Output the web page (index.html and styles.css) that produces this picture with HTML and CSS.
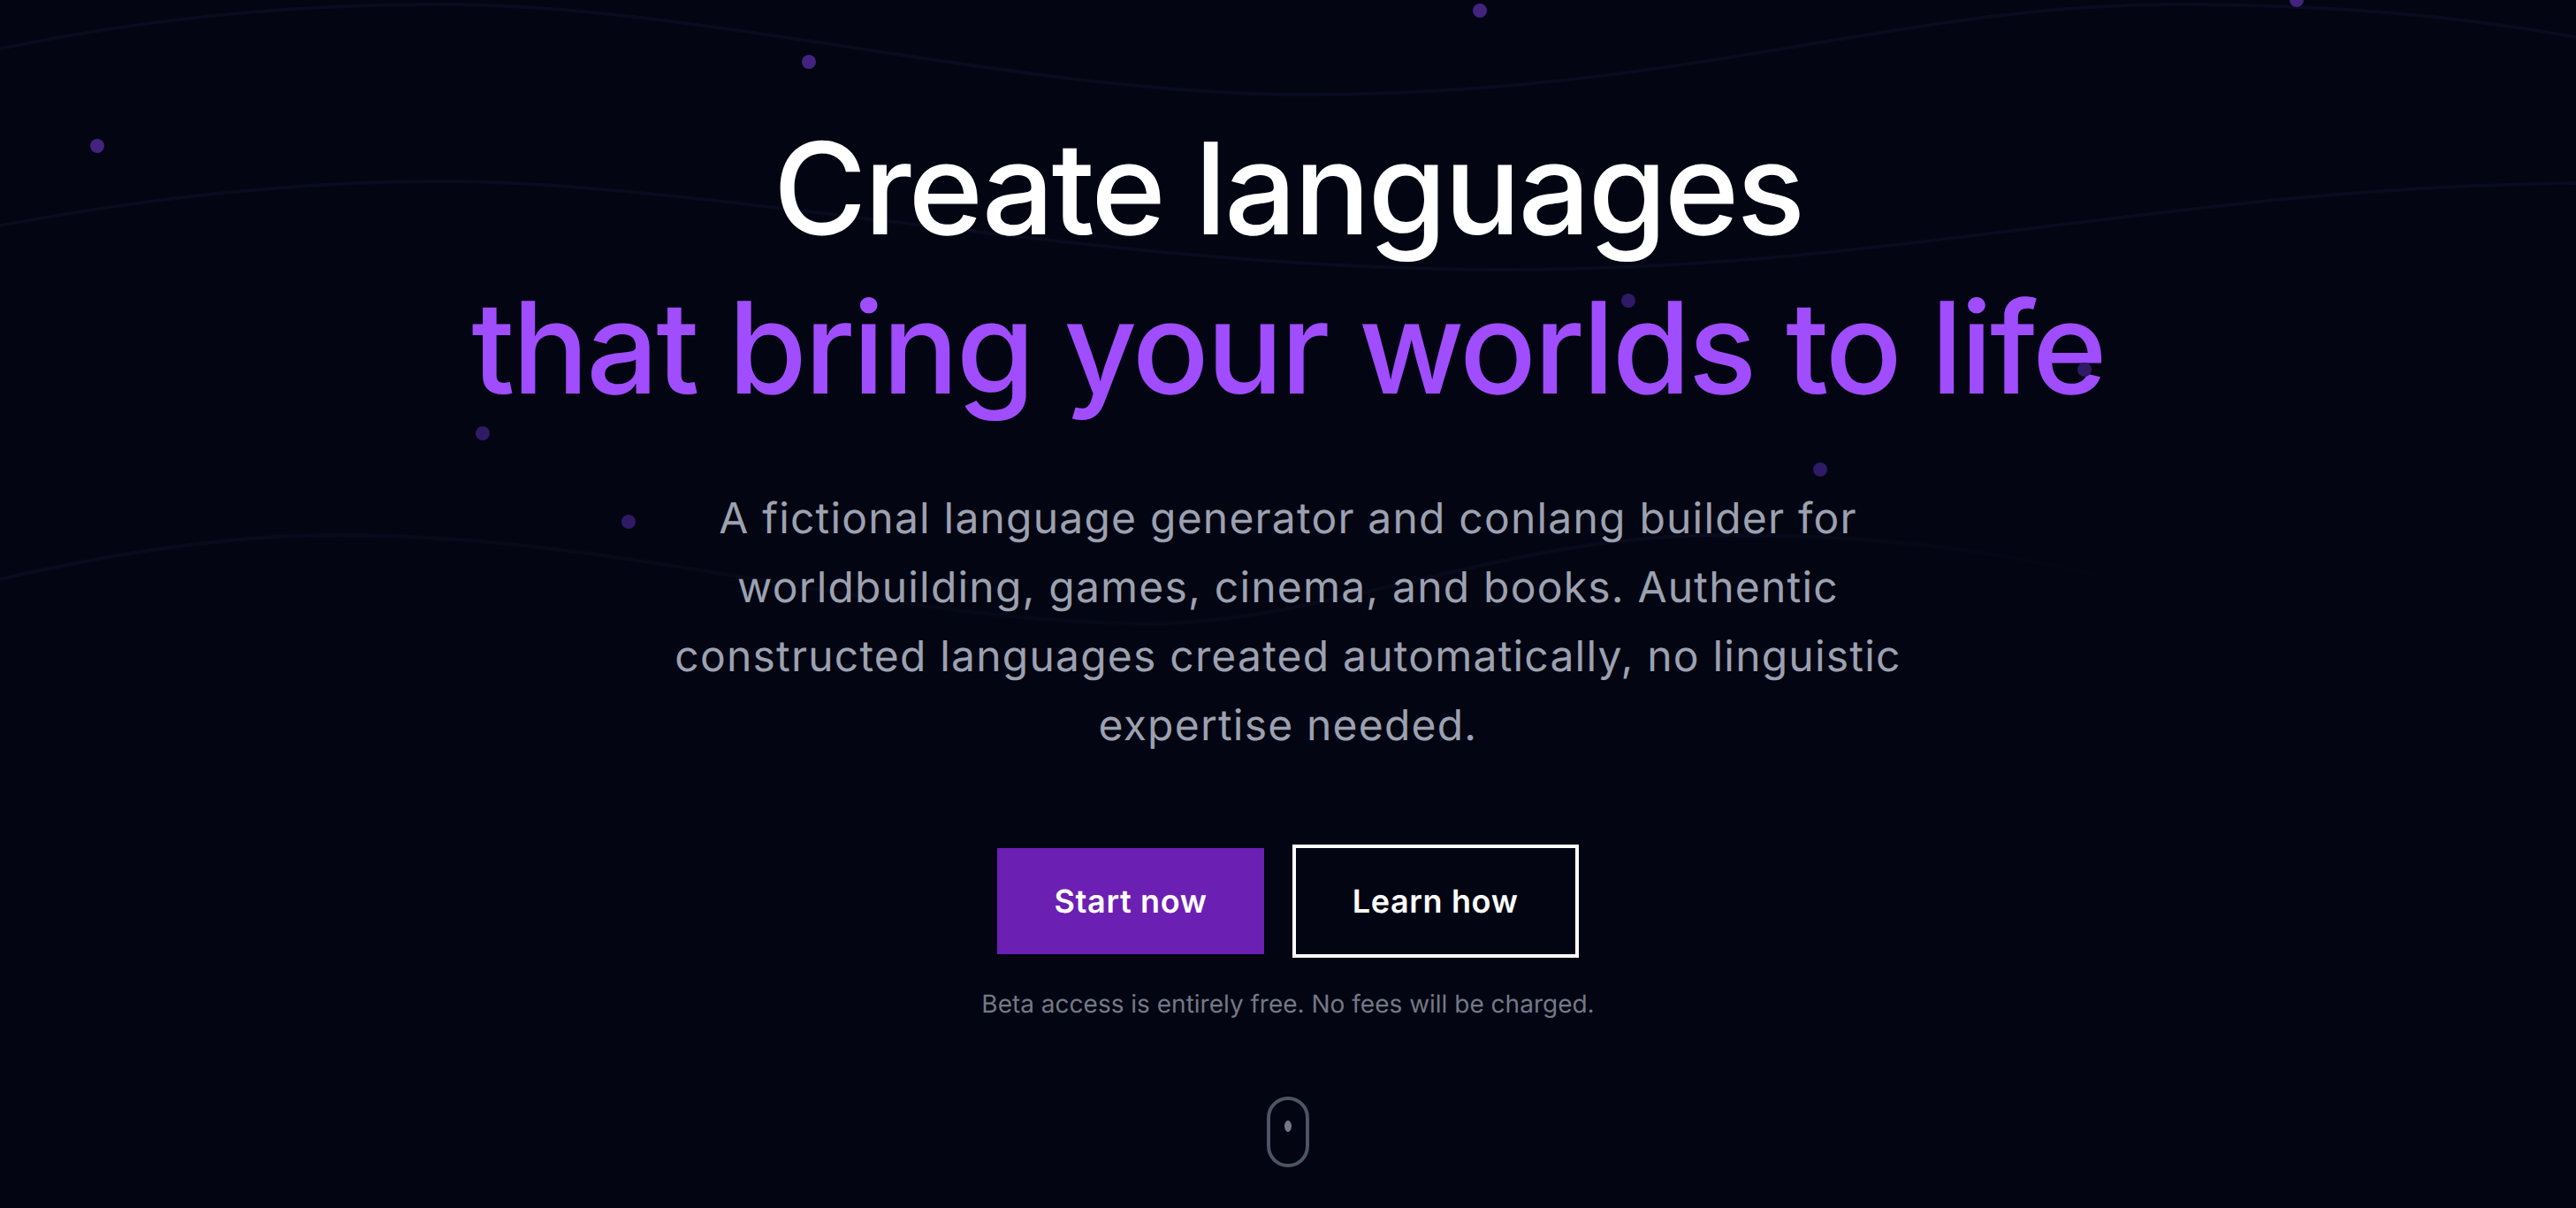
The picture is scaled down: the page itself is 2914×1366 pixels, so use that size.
FILE: index.html
```html
<!DOCTYPE html>
<html lang="en">
<head>
    <meta charset="UTF-8">
    <meta name="viewport" content="width=device-width, initial-scale=1.0">
    <title>Create languages</title>
    <link rel="stylesheet" href="styles.css">
</head>
<body>
    <section class="hero">
        <!-- Background decoration -->
        <svg class="waves" width="2914" height="1366" viewBox="0 0 2914 1366" fill="none">
            <defs>
                <linearGradient id="wave-fade" gradientUnits="userSpaceOnUse" x1="0" y1="0" x2="2420" y2="0">
                    <stop offset="0" stop-color="#090b1e"/>
                    <stop offset="0.5" stop-color="#060917"/>
                    <stop offset="0.8" stop-color="#090b1e"/>
                    <stop offset="1" stop-color="#030512"/>
                </linearGradient>
            </defs>
            <path d="M0 55 C180 18 340 5 500 5 C800 5 1150 107 1480 107 C1900 107 2150 5 2460 5 C2640 5 2780 18 2914 42"/>
            <path d="M0 255 C180 222 340 205 500 205 C800 205 1250 305 1700 305 C2150 305 2450 212 2914 207"/>
            <path class="wave-soft" d="M0 655 C130 625 260 605 380 605 C720 605 1000 705 1300 705 C1500 705 1700 605 1950 605 C2120 605 2260 620 2420 662"/>
        </svg>
        <span class="dot dot-bright" style="left: 102px; top: 157px;"></span>
        <span class="dot dot-bright" style="left: 907px; top: 62px;"></span>
        <span class="dot dot-bright" style="left: 1666px; top: 4px;"></span>
        <span class="dot dot-bright" style="left: 2590px; top: -8px;"></span>
        <span class="dot" style="left: 538px; top: 482px;"></span>
        <span class="dot" style="left: 703px; top: 582px;"></span>
        <span class="dot" style="left: 1834px; top: 332px;"></span>
        <span class="dot" style="left: 2051px; top: 523px;"></span>
        <span class="dot dot-over" style="left: 2350px; top: 410px;"></span>

        <div class="content">
            <h1>Create languages<span class="accent">that bring your worlds to life</span></h1>
            <p class="lead">A fictional language generator and conlang builder for worldbuilding, games, cinema, and books. Authentic constructed languages created automatically, no linguistic expertise needed.</p>
            <div class="actions">
                <a class="btn btn-primary" href="#">Start now</a>
                <a class="btn btn-outline" href="#">Learn how</a>
            </div>
            <p class="note">Beta access is entirely free. No fees will be charged.</p>
            <div class="mouse"><span class="wheel"></span></div>
        </div>
    </section>
</body>
</html>
```

FILE: styles.css
```css
* {
    box-sizing: border-box;
}

body {
    margin: 0;
    background-color: #030512;
    font-family: Inter, 'Noto Sans', sans-serif;
    color: #fff;
    text-rendering: geometricPrecision;
}

.hero {
    position: relative;
    height: 1366px;
    overflow: hidden;
}

.waves {
    position: absolute;
    top: 0;
    left: 0;
}

.waves path {
    stroke: #090b1e;
    stroke-width: 4;
}

.waves .wave-soft {
    stroke: url(#wave-fade);
}

.dot {
    position: absolute;
    width: 16px;
    height: 16px;
    border-radius: 50%;
    background-color: #2f1a66;
}

.dot-bright {
    background-color: #42237f;
}

.dot-over {
    z-index: 2;
}

.content {
    position: relative;
    display: flex;
    flex-direction: column;
    align-items: center;
    padding-top: 123px;
    text-align: center;
}

h1 {
    margin: 0 0 64px;
    font-size: 144px;
    font-weight: 500;
    line-height: 180px;
    letter-spacing: -0.02em;
}

.accent {
    display: block;
    color: #a04dff;
}

.lead {
    width: 1440px;
    margin: 0 0 96px;
    font-size: 48px;
    line-height: 78px;
    letter-spacing: 0.025em;
    color: #9ca1b0;
}

.actions {
    display: flex;
    align-items: center;
    gap: 32px;
}

.btn {
    font-size: 36px;
    font-weight: 600;
    line-height: 48px;
    letter-spacing: 0.018em;
    color: #fff;
    text-decoration: none;
}

.btn-primary {
    padding: 36px 64px;
    background-color: #6b1fb3;
}

.btn-outline {
    padding: 36px 64px;
    border: 4px solid #fff;
}

.note {
    margin: 32px 0 0;
    font-size: 28px;
    line-height: 40px;
    color: #747886;
}

.mouse {
    display: flex;
    justify-content: center;
    width: 48px;
    height: 80px;
    margin-top: 85px;
    padding-top: 23px;
    border: 4px solid #4b5563;
    border-radius: 24px;
}

.wheel {
    width: 8px;
    height: 13px;
    border-radius: 50%;
    background-color: #747886;
}
```
